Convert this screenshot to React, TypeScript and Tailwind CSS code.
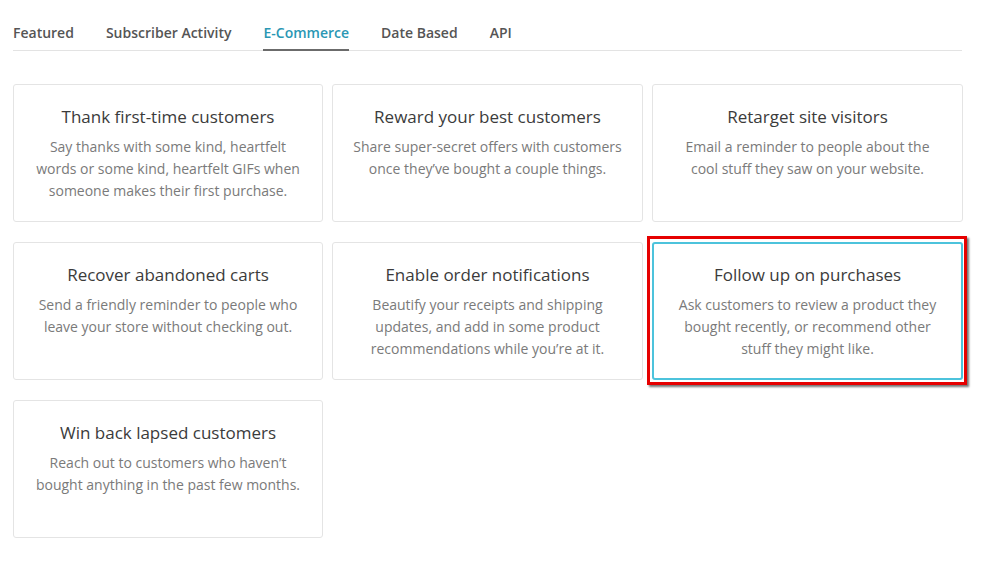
const tabs = ["Featured", "Subscriber Activity", "E-Commerce", "Date Based", "API"];

const cards = [
  {
    title: "Thank first-time customers",
    desc: "Say thanks with some kind, heartfelt words or some kind, heartfelt GIFs when someone makes their first purchase.",
  },
  {
    title: "Reward your best customers",
    desc: "Share super-secret offers with customers once they’ve bought a couple things.",
  },
  {
    title: "Retarget site visitors",
    desc: "Email a reminder to people about the cool stuff they saw on your website.",
  },
  {
    title: "Recover abandoned carts",
    desc: "Send a friendly reminder to people who leave your store without checking out.",
  },
  {
    title: "Enable order notifications",
    desc: "Beautify your receipts and shipping updates, and add in some product recommendations while you’re at it.",
  },
  {
    title: "Follow up on purchases",
    desc: "Ask customers to review a product they bought recently, or recommend other stuff they might like.",
    marked: true,
  },
  {
    title: "Win back lapsed customers",
    desc: "Reach out to customers who haven’t bought anything in the past few months.",
  },
];

export default function App() {
  return (
    <div className="w-[1000px] h-[562px] bg-white font-['Open_Sans',sans-serif] overflow-hidden">
      <div className="ml-[13px] w-[949px] pt-[22px]">
        <nav className="flex border-b border-[#e3e3e3]">
          {tabs.map((tab) => (
            <div
              key={tab}
              className={
                tab === "E-Commerce"
                  ? "mr-[32px] pb-[6px] text-[14px] font-semibold text-[#2a97b4] border-b-2 border-[#6b6b6b] -mb-px"
                  : "mr-[32px] pb-[7px] text-[14px] font-semibold text-[#555]"
              }
            >
              {tab}
            </div>
          ))}
        </nav>

        <div className="mt-[33px] grid grid-cols-[310px_311px_311px] gap-x-[9px] gap-y-[20px]">
          {cards.map((card) => (
            <div key={card.title} className="relative">
              <div
                className={
                  card.marked
                    ? "h-[138px] rounded-[3px] border-2 border-[#4cc3dc] bg-white px-[18px] pt-[19px] text-center"
                    : "h-[138px] rounded-[3px] border border-[#e4e4e4] bg-white px-[19px] pt-[20px] text-center"
                }
              >
                <h3 className="text-[17px] leading-[24px] text-[#3b3b3b]">{card.title}</h3>
                <p className="mt-[7px] text-[14px] leading-[22px] text-[#7a7a7a]">{card.desc}</p>
              </div>
              {card.marked && (
                <div className="pointer-events-none absolute -left-[5px] -top-[6px] -right-[4px] -bottom-[5px] border-[3px] border-[#e60000] shadow-[2px_2px_2px_rgba(0,0,0,0.55)]" />
              )}
            </div>
          ))}
        </div>
      </div>
    </div>
  );
}
